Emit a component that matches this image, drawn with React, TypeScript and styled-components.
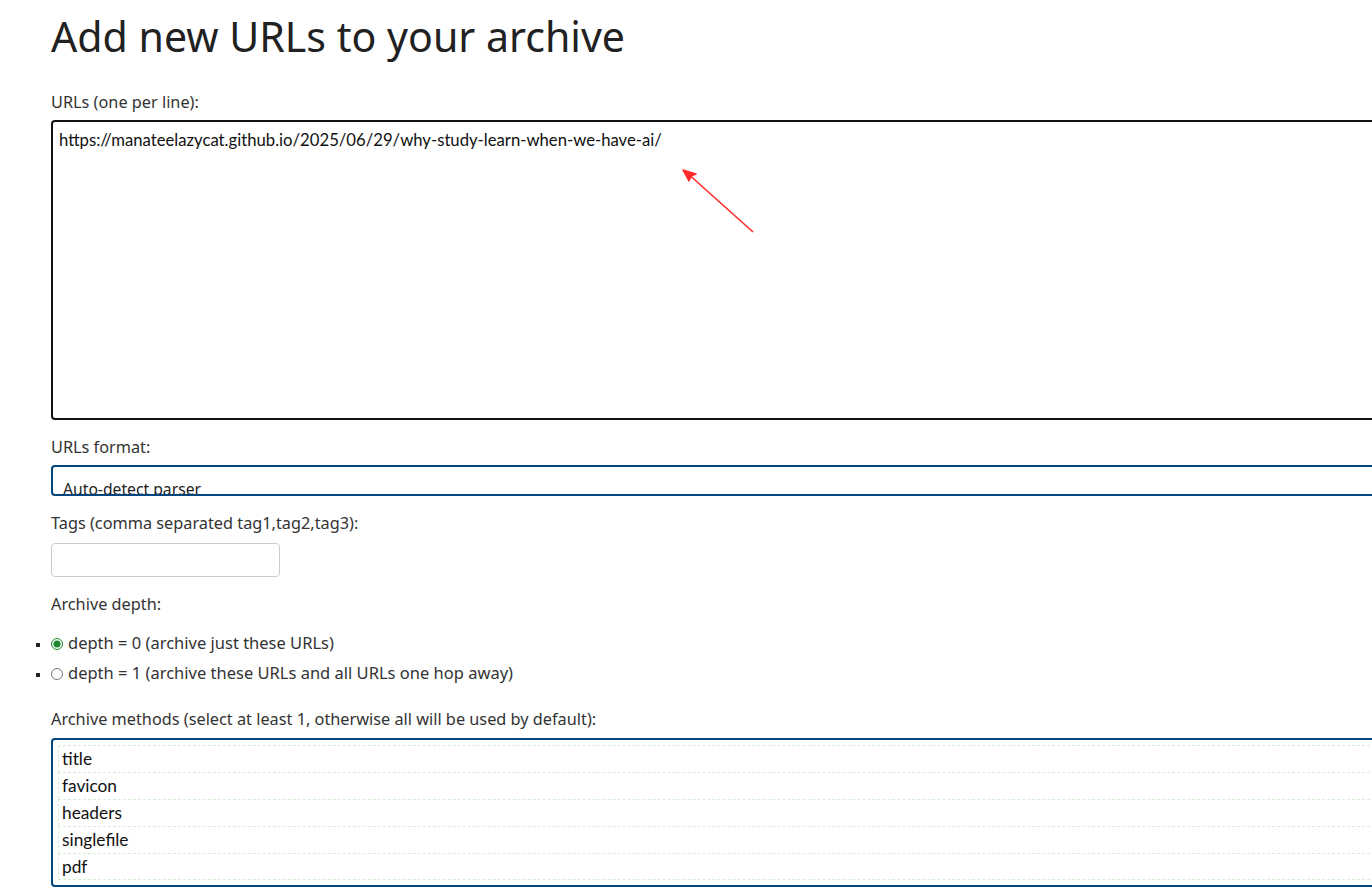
import React from "react";
import styled, { createGlobalStyle } from "styled-components";

const GlobalStyle = createGlobalStyle`
  html, body {
    margin: 0;
    padding: 0;
    background: #fff;
    overflow: hidden;
  }
  body {
    font-family: "Noto Sans", "Open Sans", sans-serif;
    color: #333;
  }
`;

const methods = ["title", "favicon", "headers", "singlefile", "pdf"];

export default function App() {
  return (
    <>
      <GlobalStyle />
      <Page>
        <Title>Add new URLs to your archive</Title>
        <Form>
          <Label $top={32}>URLs (one per line):</Label>
          <UrlBox
            readOnly
            spellCheck={false}
            value="https://manateelazycat.github.io/2025/06/29/why-study-learn-when-we-have-ai/"
          />
          <Label $top={17}>URLs format:</Label>
          <FormatSelect>
            <SelectText>Auto-detect parser</SelectText>
          </FormatSelect>
          <Label $top={17}>Tags (comma separated tag1,tag2,tag3):</Label>
          <TagInput type="text" />
          <Label $top={17}>Archive depth:</Label>
          <DepthList>
            <DepthItem>
              <Radio type="radio" name="depth" defaultChecked />
              depth = 0 (archive just these URLs)
            </DepthItem>
            <DepthItem>
              <Radio type="radio" name="depth" />
              depth = 1 (archive these URLs and all URLs one hop away)
            </DepthItem>
          </DepthList>
          <Label $top={21}>Archive methods (select at least 1, otherwise all will be used by default):</Label>
          <MethodBox>
            {methods.map((m) => (
              <MethodOption key={m}>{m}</MethodOption>
            ))}
          </MethodBox>
        </Form>
        <Arrow width="90" height="80" viewBox="0 0 90 80">
          <line x1="83" y1="72" x2="16" y2="12" stroke="#ff2a2a" strokeWidth="1.6" />
          <path d="M13 10 L26 14 L21 16 L19 21 Z" fill="#ff2a2a" stroke="#ff2a2a" strokeWidth="1.5" strokeLinejoin="round" />
        </Arrow>
      </Page>
    </>
  );
}

const Page = styled.div`
  position: relative;
  padding: 12px 0 0 51px;
  height: 887px;
  box-sizing: border-box;
  overflow: hidden;
`;

const Title = styled.h1`
  margin: 0;
  font-size: 41.1px;
  line-height: 48px;
  font-weight: 400;
  color: #212121;
  font-family: "Noto Sans", "Open Sans", sans-serif;
`;

const Form = styled.form`
  display: flex;
  flex-direction: column;
  align-items: flex-start;
`;

const Label = styled.label<{ $top: number }>`
  display: block;
  margin-top: ${(p) => p.$top}px;
  margin-bottom: 8px;
  font-size: 16.3px;
  line-height: 20px;
  color: #333;
  white-space: nowrap;
`;

const UrlBox = styled.textarea`
  box-sizing: border-box;
  width: 1360px;
  height: 300px;
  margin: 0;
  padding: 8px 6px;
  border: 2px solid #111;
  border-radius: 4px;
  resize: none;
  outline: none;
  font-family: "Lato", "Noto Sans", sans-serif;
  font-size: 16.7px;
  line-height: 20px;
  color: #111;
  background: #fff;
`;

const FormatSelect = styled.div`
  box-sizing: border-box;
  width: 1360px;
  height: 31px;
  border: 2px solid #00457c;
  border-radius: 4px;
  padding: 12px 0 0 10px;
  overflow: hidden;
`;

const SelectText = styled.span`
  display: block;
  font-size: 15.7px;
  line-height: 20px;
  color: #222;
`;

const TagInput = styled.input`
  box-sizing: border-box;
  width: 229px;
  height: 34px;
  margin: 2px 0 0;
  border: 1px solid #ccc;
  border-radius: 4px;
  outline: none;
  padding: 4px 8px;
  font-size: 14px;
`;

const DepthList = styled.ul`
  margin: 6px 0 0;
  padding: 0;
  list-style: square;
`;

const DepthItem = styled.li`
  display: list-item;
  height: 30px;
  line-height: 30px;
  font-size: 16.5px;
  color: #333;
  white-space: nowrap;
  &::marker {
    font-size: 12px;
    color: #222;
  }
`;

const Radio = styled.input`
  width: 12px;
  height: 12px;
  margin: 0 5px 0 0;
  vertical-align: -1px;
  accent-color: #1e8a2e;
`;

const MethodBox = styled.div`
  box-sizing: border-box;
  width: 1360px;
  height: 149px;
  margin-top: 1px;
  border: 2px solid #00457c;
  border-radius: 4px;
  padding: 5px 4px 0 5px;
  overflow: hidden;
`;

const MethodOption = styled.div`
  box-sizing: border-box;
  height: 27px;
  padding-left: 3px;
  border: 1px dashed #d6f0d6;
  border-bottom: none;
  font-family: "Lato", "Noto Sans", sans-serif;
  font-size: 17.3px;
  line-height: 26px;
  color: #111;

  &:last-child {
    border-bottom: 1px dashed #d6f0d6;
  }
`;

const Arrow = styled.svg`
  position: absolute;
  left: 670px;
  top: 160px;
`;
